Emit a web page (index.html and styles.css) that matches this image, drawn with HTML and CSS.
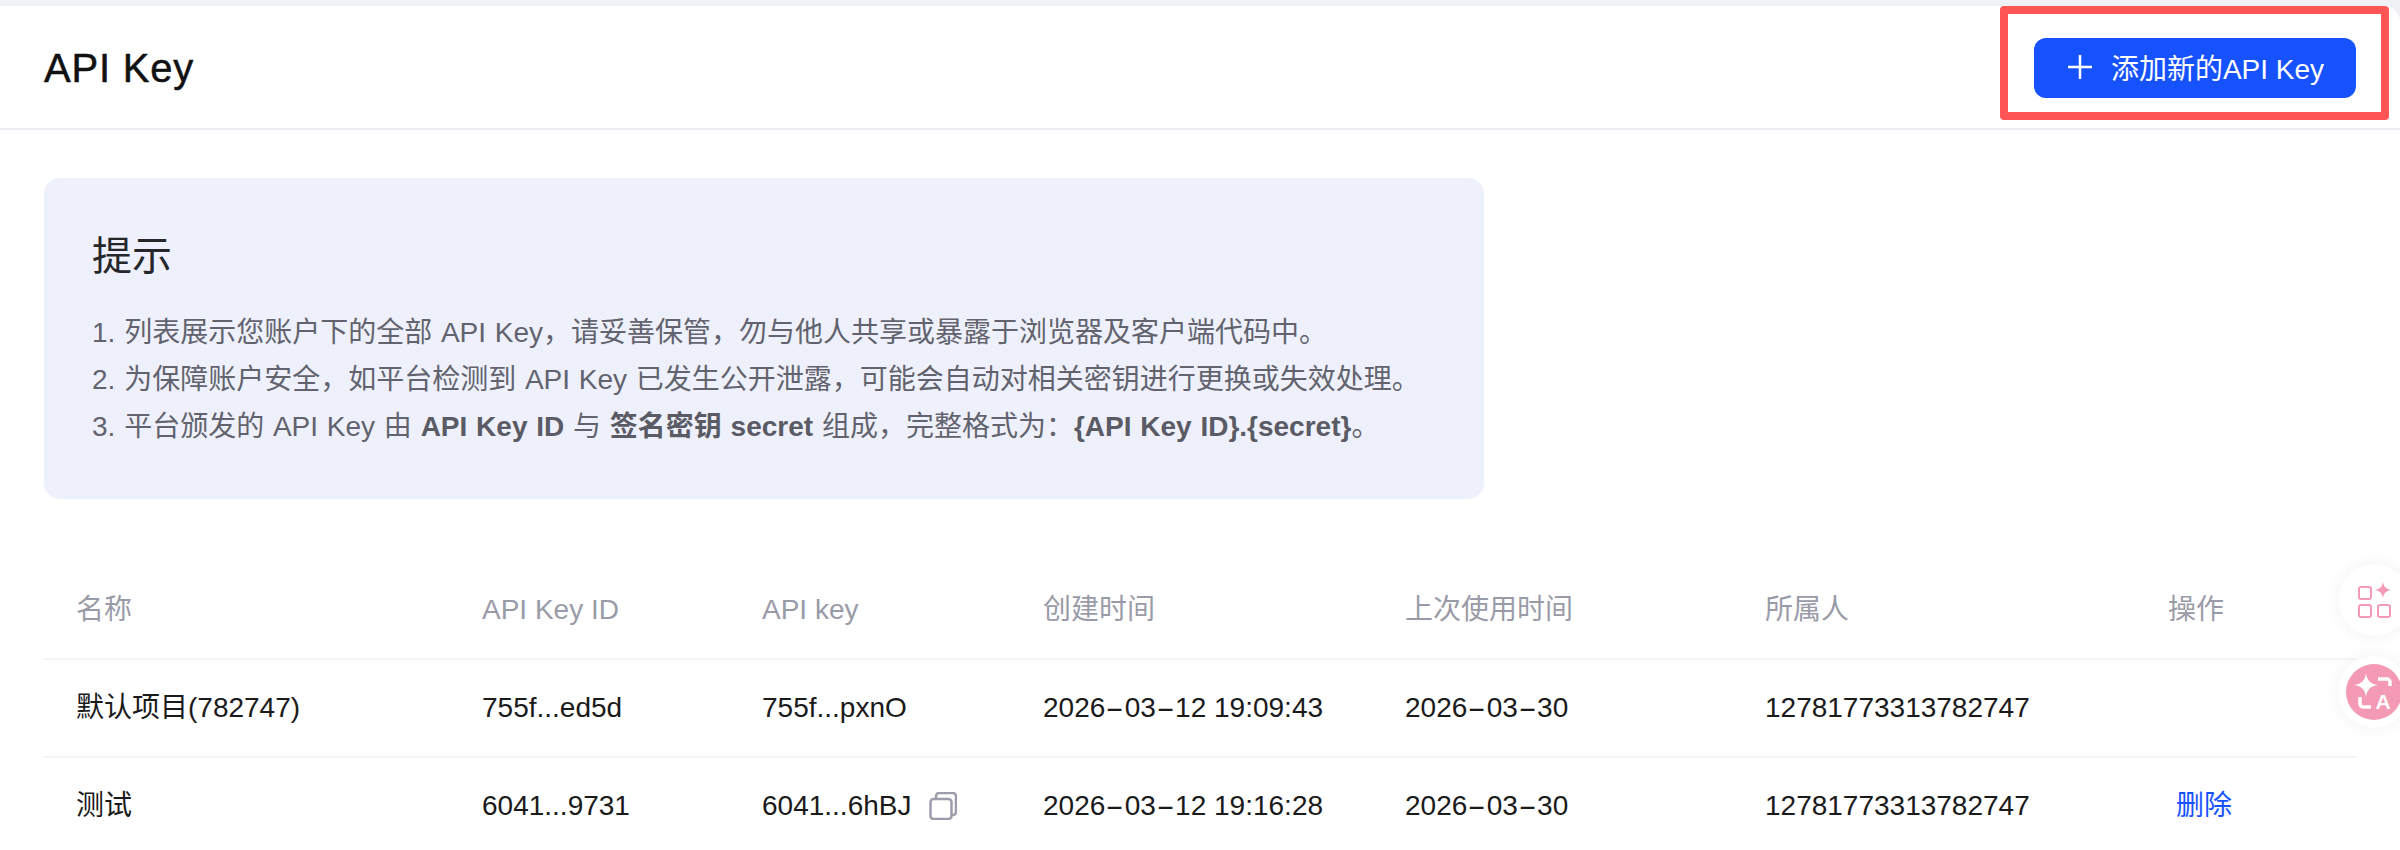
FILE: index.html
```html
<!DOCTYPE html>
<html lang="zh-CN">
<head>
    <meta charset="UTF-8">
    <meta name="viewport" content="width=device-width, initial-scale=1.0">
    <title>API Key</title>
    <link rel="stylesheet" href="styles.css">
</head>
<body>
    <div class="page">
        <!-- Header -->
        <header class="top-bar">
            <h1>API Key</h1>
            <div class="add-mark">
                <button class="add-btn">
                    <svg class="plus-icon" viewBox="0 0 24 24"><path d="M12 0v24M0 12h24"/></svg>
                    <span>添加新的API Key</span>
                </button>
            </div>
        </header>

        <main class="content">
            <!-- Tips -->
            <section class="tips">
                <h2>提示</h2>
                <p>1. 列表展示您账户下的全部 API Key，请妥善保管，勿与他人共享或暴露于浏览器及客户端代码中。</p>
                <p>2. 为保障账户安全，如平台检测到 API Key 已发生公开泄露，可能会自动对相关密钥进行更换或失效处理。</p>
                <p>3. 平台颁发的 API Key 由 <strong>API Key ID</strong> 与 <strong>签名密钥 secret</strong> 组成，完整格式为：<strong>{API Key ID}.{secret}</strong>。</p>
            </section>

            <!-- Keys -->
            <table class="key-table">
                <colgroup>
                    <col class="col-name">
                    <col class="col-id">
                    <col class="col-key">
                    <col class="col-created">
                    <col class="col-used">
                    <col class="col-owner">
                    <col class="col-action">
                </colgroup>
                <thead>
                    <tr>
                        <th>名称</th>
                        <th>API Key ID</th>
                        <th>API key</th>
                        <th>创建时间</th>
                        <th>上次使用时间</th>
                        <th>所属人</th>
                        <th>操作</th>
                    </tr>
                </thead>
                <tbody>
                    <tr>
                        <td>默认项目(782747)</td>
                        <td>755f...ed5d</td>
                        <td>755f...pxnO</td>
                        <td>2026<span class="dash">-</span>03<span class="dash">-</span>12 19:09:43</td>
                        <td>2026<span class="dash">-</span>03<span class="dash">-</span>30</td>
                        <td>12781773313782747</td>
                        <td></td>
                    </tr>
                    <tr>
                        <td>测试</td>
                        <td>6041...9731</td>
                        <td>
                            <span class="key-cell">6041...6hBJ
                                <svg class="copy-icon" viewBox="0 0 28 28"><rect x="1.500" y="7" width="21" height="20" rx="3"/><path d="M7 7V4a3 3 0 0 1 3-3h14a3 3 0 0 1 3 3v16a3 3 0 0 1-3 3h-1.500"/></svg>
                            </span>
                        </td>
                        <td>2026<span class="dash">-</span>03<span class="dash">-</span>12 19:16:28</td>
                        <td>2026<span class="dash">-</span>03<span class="dash">-</span>30</td>
                        <td>12781773313782747</td>
                        <td><a class="del-link" href="#">删除</a></td>
                    </tr>
                </tbody>
            </table>
        </main>
    </div>

    <!-- Floating tools -->
    <div class="float-btn float-apps">
        <svg viewBox="0 0 36 36"><g class="apps-box"><rect x="3" y="5" width="12" height="12" rx="2"/><rect x="3" y="23" width="12" height="12" rx="2"/><rect x="22" y="23" width="12" height="12" rx="2"/></g><path class="apps-star" d="M27 0C28 5 30 7 35 8C30 9 28 11 27 16C26 11 24 9 19 8C24 7 26 5 27 0Z"/></svg>
    </div>
    <div class="float-btn float-trans">
        <span class="trans-circle">
            <svg viewBox="0 0 56 56"><path class="trans-star" d="M20 9C21 16 24 20 32 21C24 22 21 26 20 33C19 26 16 22 8 21C16 20 19 16 20 9Z"/><path class="trans-arrow" d="M32 15h9a3 3 0 0 1 3 3v4M14 33v7a3 3 0 0 0 3 3h8"/><text class="trans-a" x="37" y="45">A</text></svg>
        </span>
    </div>
</body>
</html>
```

FILE: styles.css
```css
/* Reset */
* {
    margin: 0;
    padding: 0;
    box-sizing: border-box;
}

body {
    height: 850px;
    overflow: hidden;
    background-color: #f0f1f5;
    color: #1a1a1a;
    font-family: "Liberation Sans", "Noto Sans CJK SC", sans-serif;
    font-size: 28px;
}

.page {
    margin-top: 6px;
    height: 844px;
    overflow: hidden;
    background-color: #fff;
    border-top-right-radius: 16px;
}

/* Header */
.top-bar {
    height: 124px;
    padding: 0 11px 0 44px;
    display: flex;
    justify-content: space-between;
    border-bottom: 2px solid #ecedf2;
}

.top-bar h1 {
    margin-top: 37px;
    font-size: 40px;
    line-height: 50px;
    font-weight: 400;
    letter-spacing: 0.8px;
    color: #111;
    -webkit-text-stroke: 0.5px #111;
}

.add-mark {
    width: 389px;
    height: 114px;
    padding: 24px 0 0 26px;
    border: 8px solid #ff5555;
    border-radius: 4px;
}

.add-btn {
    width: 322px;
    height: 60px;
    padding-bottom: 2px;
    display: flex;
    align-items: center;
    justify-content: center;
    gap: 19px;
    border: none;
    border-radius: 12px;
    background-color: #1653ff;
    color: #fff;
    font-family: inherit;
    font-size: 28px;
}

.plus-icon {
    width: 24px;
    height: 24px;
    margin-left: 2px;
    fill: none;
    stroke: #fff;
    stroke-width: 2.5;
}

/* Tips */
.content {
    padding: 48px 44px 0;
}

.tips {
    width: 1440px;
    height: 321px;
    padding: 50px 48px 0;
    background-color: #eef1fb;
    border-radius: 16px;
    color: #62636e;
}

.tips h2 {
    margin-bottom: 25px;
    font-size: 40px;
    line-height: 56px;
    font-weight: 400;
    color: #26272b;
}

.tips p {
    line-height: 47px;
    word-spacing: 1px;
    white-space: nowrap;
}

.tips strong {
    font-weight: 700;
    color: #5a5b65;
}

/* Table */
.key-table {
    width: 2312px;
    margin-top: 62px;
    table-layout: fixed;
    border-collapse: collapse;
}

.col-name { width: 406px; }
.col-id { width: 280px; }
.col-key { width: 281px; }
.col-created { width: 362px; }
.col-used { width: 360px; }
.col-owner { width: 403px; }
.col-action { width: 220px; }

.key-table th,
.key-table td {
    padding: 0 0 0 32px;
    height: 98px;
    line-height: 40px;
    text-align: left;
    font-weight: 400;
    border-bottom: 2px solid #f4f4f6;
    white-space: nowrap;
}

.key-table th {
    color: #9a9ba8;
}

/* wide date separator */
.dash {
    display: inline-block;
    margin: 0 5px;
    transform: scaleX(2);
}

.key-cell {
    display: flex;
    align-items: center;
    gap: 18px;
}

.copy-icon {
    width: 28px;
    height: 28px;
    fill: none;
    stroke: #9c9dac;
    stroke-width: 2.5;
}

.del-link {
    margin-left: 8px;
    color: #1653ff;
    text-decoration: none;
}

/* Floating buttons */
.float-btn {
    position: absolute;
    left: 2338px;
    width: 72px;
    height: 72px;
    display: flex;
    align-items: center;
    justify-content: center;
    border-radius: 50%;
    background-color: #fff;
    box-shadow: 0 0 16px rgba(0, 0, 0, 0.06);
}

.float-apps {
    top: 564px;
}

.float-apps svg {
    width: 36px;
    height: 36px;
}

.apps-box {
    fill: none;
    stroke: #f49ab4;
    stroke-width: 2;
}

.apps-star {
    fill: #f49ab4;
}

.float-trans {
    top: 656px;
}

.trans-circle {
    width: 56px;
    height: 56px;
    border-radius: 50%;
    background-color: #f49ab4;
}

.trans-circle svg {
    display: block;
    width: 56px;
    height: 56px;
}

.trans-star {
    fill: #fff;
}

.trans-arrow {
    fill: none;
    stroke: #fff;
    stroke-width: 3.5;
}

.trans-a {
    fill: #fff;
    font-size: 21px;
    font-weight: 700;
    text-anchor: middle;
}
```
